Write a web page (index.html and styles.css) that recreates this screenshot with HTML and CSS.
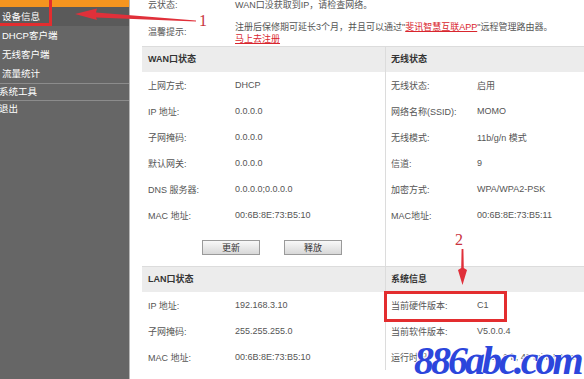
FILE: index.html
```html
<!DOCTYPE html>
<html lang="zh-CN">
<head>
  <meta charset="UTF-8" />
  <title>设备信息</title>
  <link rel="stylesheet" href="styles.css">
</head>
<body>
<div class="page">

  <!-- left menu -->
  <div class="sidebar">
    <div class="menu-top"></div>
    <div class="menu-item active">设备信息</div>
    <div class="menu-item">DHCP客户端</div>
    <div class="menu-item">无线客户端</div>
    <div class="menu-item">流量统计</div>
    <div class="menu-item main">系统工具</div>
    <div class="menu-item main">退出</div>
  </div>

  <div class="content">
    <div class="notice">
      <div class="row"><span class="label">云状态:</span><span>WAN口没获取到IP，请检查网络。</span></div>
      <div class="row tall">
        <span class="label">温馨提示:</span>
        <div class="tip">注册后保修期可延长3个月，并且可以通过"<a href="#">斐讯智慧互联APP</a>"远程管理路由器。<br><a href="#">马上去注册</a></div>
      </div>
    </div>

    <div class="section">
      <div class="panel">
        <div class="panel-head">WAN口状态</div>
        <div class="row"><span class="label">上网方式:</span><span>DHCP</span></div>
        <div class="row"><span class="label">IP 地址:</span><span>0.0.0.0</span></div>
        <div class="row"><span class="label">子网掩码:</span><span>0.0.0.0</span></div>
        <div class="row"><span class="label">默认网关:</span><span>0.0.0.0</span></div>
        <div class="row"><span class="label">DNS 服务器:</span><span>0.0.0.0;0.0.0.0</span></div>
        <div class="row"><span class="label">MAC 地址:</span><span>00:6B:8E:73:B5:10</span></div>
        <div class="btn-row">
          <button type="button">更新</button>
          <button type="button">释放</button>
        </div>
      </div>
      <div class="panel side">
        <div class="panel-head">无线状态</div>
        <div class="row"><span class="label">无线状态:</span><span>启用</span></div>
        <div class="row"><span class="label">网络名称(SSID):</span><span>MOMO</span></div>
        <div class="row"><span class="label">无线模式:</span><span>11b/g/n 模式</span></div>
        <div class="row"><span class="label">信道:</span><span>9</span></div>
        <div class="row"><span class="label">加密方式:</span><span>WPA/WPA2-PSK</span></div>
        <div class="row"><span class="label">MAC地址:</span><span>00:6B:8E:73:B5:11</span></div>
      </div>
    </div>

    <div class="section">
      <div class="panel">
        <div class="panel-head">LAN口状态</div>
        <div class="row"><span class="label">IP 地址:</span><span>192.168.3.10</span></div>
        <div class="row"><span class="label">子网掩码:</span><span>255.255.255.0</span></div>
        <div class="row"><span class="label">MAC 地址:</span><span>00:6B:8E:73:B5:10</span></div>
      </div>
      <div class="panel side">
        <div class="panel-head">系统信息</div>
        <div class="row"><span class="label">当前硬件版本:</span><span>C1</span></div>
        <div class="row"><span class="label">当前软件版本:</span><span>V5.0.0.4</span></div>
        <div class="row"><span class="label">运行时间:</span><span>0 day, 0 h, 49 min, 50 sec</span></div>
      </div>
    </div>
  </div>

  <!-- red annotations drawn over the screenshot -->
  <svg class="marks" width="584" height="379" viewBox="0 0 584 379">
    <rect x="-5" y="-5" width="55.5" height="29.5" fill="none" stroke="#e32d2f" stroke-width="3"/>
    <polygon points="75,14 97,8.5 96,12.5 196,20.5 196,21.5 96,17.5 97,20" fill="#e0303a"/>
    <text x="199" y="26" class="mark-num">1</text>
    <rect x="385.5" y="292.5" width="120" height="28" fill="none" stroke="#e32d2f" stroke-width="3"/>
    <polygon points="461.6,249 463.4,249 463.8,268 467,270 462.5,285 458,270 461.2,268" fill="#e0303a"/>
    <text x="455" y="245" class="mark-num">2</text>
  </svg>

  <div class="watermark">886abc.com</div>
</div>
</body>
</html>
```

FILE: styles.css
```css
body {
  margin: 0; background: #fff; color: #555;
  font-family: "Liberation Sans", "Noto Sans CJK SC", sans-serif; font-size: 9px;
}
.page {
  position: relative; display: flex;
  width: 584px; height: 379px; overflow: hidden;
}
.sidebar {
  width: 129px; flex: none; background: #666;
  border-right: 1px solid #b8b8b8; color: #fff; font-size: 9.5px;
}
.menu-top { height: 7px; background: #f5951f; }
.menu-item { line-height: 19px; padding-left: 2px; white-space: nowrap; }
.menu-item.active { background: #5a5a5a; }
.menu-item.main {
  line-height: 16px; border-top: 1px solid #8c8c8c;
  padding-left: 0; text-indent: -1px;
}
.content { flex: 1; min-width: 0; padding-left: 12px; }
.notice { margin-top: -9px; }
.row {
  display: flex; align-items: center; height: 26px;
  padding-left: 6px; white-space: nowrap;
}
.label { width: 87px; flex: none; }
.row.tall { height: 29px; }
.tip { align-self: flex-start; padding-top: 4px; line-height: 12px; }
.tip a { color: #d9262e; text-decoration: underline; }
.section { display: flex; border-top: 1px solid #dcdcdc; }
.panel { width: 243px; flex: none; }
.panel.side { flex: 1; border-left: 1px solid #dcdcdc; }
.panel-head {
  height: 25px; line-height: 25px; padding-left: 6px;
  background: #ececec; color: #333; font-weight: bold;
}
.panel.side .panel-head, .panel.side .row { padding-left: 5px; }
.panel.side .label { width: 86px; }
.btn-row {
  display: flex; align-items: center; gap: 24px;
  height: 38px; padding-left: 60px;
}
button {
  width: 58px; height: 15px; padding: 0;
  font: inherit; color: #333;
  border: 1px solid #9a9a9a; background: linear-gradient(#f8f8f8, #d8d8d8);
}
.marks { position: absolute; left: 0; top: 0; pointer-events: none; }
.mark-num { font-family: "Liberation Serif", serif; font-size: 16px; fill: #c9333d; }
.watermark {
  position: absolute; left: 414px; top: 341px;
  font-family: "Liberation Serif", serif; font-style: italic; font-weight: bold;
  font-size: 40px; line-height: 40px; letter-spacing: -3px;
  color: #2c46dc;
  text-shadow: 1px 0 #fff, -1px 0 #fff, 0 1px #fff, 0 -1px #fff;
}
```
